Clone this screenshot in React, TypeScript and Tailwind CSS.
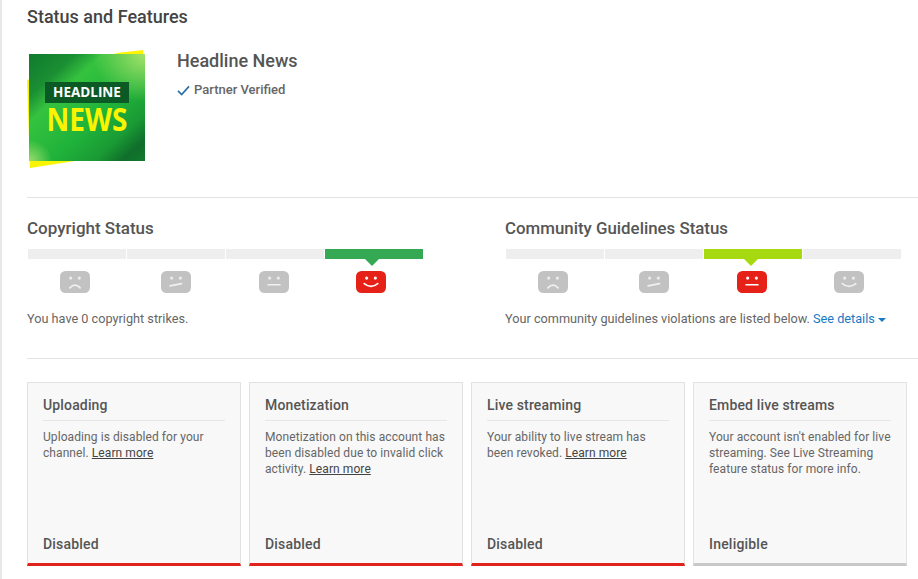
const font = { fontFamily: "Roboto, sans-serif" }

function Face({ mood, active }: { mood: number; active?: boolean }) {
  const mouths = [
    "M12.5 21.5 Q19 14.5 25.5 21.5",
    "M11.5 19 L26 16",
    "M11.5 17.5 L26.5 17.5",
    "M10.5 16 Q19 23 27.5 16",
  ]
  return (
    <svg width="30" height="22" viewBox="0 0 38 28" preserveAspectRatio="none" className="block">
      <rect x="0" y="0" width="38" height="28" rx="7" fill={active ? "#e62117" : "#c2c2c2"} />
      <circle cx="13.5" cy="9" r="2" fill={active ? "#ffffff" : "#ececec"} />
      <circle cx="24.5" cy="9" r="2" fill={active ? "#ffffff" : "#ececec"} />
      <path d={mouths[mood]} fill="none" stroke={active ? "#ffffff" : "#f0f0f0"} strokeWidth="2.2" strokeLinecap="round" />
    </svg>
  )
}

// the faces don't sit exactly under the middle of their segments
const faceOffsets = ["mr-[5px]", "mr-0", "mr-[2px]", "mr-[6px]"]

function StatusMeter({ active, color }: { active: number; color: string }) {
  return (
    <div className="grid w-[395px] grid-cols-4 gap-[1px]">
      {[0, 1, 2, 3].map((mood, i) => (
        <div key={i} className="flex flex-col items-center">
          {i === active ? (
            <div className="relative h-2.5 w-full" style={{ backgroundColor: color }}>
              <div
                className="absolute left-1/2 top-full h-0 w-0 -translate-x-[9px] border-x-[7px] border-t-[7px] border-x-transparent"
                style={{ borderTopColor: color }}
              />
            </div>
          ) : (
            <div className="h-2.5 w-full bg-[#eeeeee]" />
          )}
          <div className={`mt-3 ${faceOffsets[i]}`}>
            <Face mood={mood} active={i === active} />
          </div>
        </div>
      ))}
    </div>
  )
}

function Logo() {
  return (
    <div className="relative h-[118px] w-[118px] shrink-0">
      <svg width="118" height="118" viewBox="0 0 118 118" className="block">
        <defs>
          <linearGradient id="base" x1="0" y1="0" x2="1" y2="1">
            <stop offset="0" stopColor="#0f7a2e" />
            <stop offset="0.2" stopColor="#1b8f33" />
            <stop offset="0.32" stopColor="#35c23f" />
            <stop offset="0.6" stopColor="#1fb23a" />
            <stop offset="0.78" stopColor="#1a9a34" />
            <stop offset="0.9" stopColor="#0f6e2b" />
            <stop offset="1" stopColor="#127a2e" />
          </linearGradient>
          <radialGradient id="tr" cx="1" cy="0" r="0.45">
            <stop offset="0" stopColor="#a5e26a" />
            <stop offset="1" stopColor="#a5e26a" stopOpacity="0" />
          </radialGradient>
          <radialGradient id="bl" cx="0" cy="1" r="0.2">
            <stop offset="0" stopColor="#9bdc6c" />
            <stop offset="1" stopColor="#9bdc6c" stopOpacity="0" />
          </radialGradient>
        </defs>
        <polygon points="90,3 116,0 118,100 3,118 0,30" fill="#fbf400" />
        <rect x="2" y="4" width="116" height="107" fill="url(#base)" />
        <rect x="2" y="4" width="116" height="107" fill="url(#tr)" />
        <rect x="2" y="4" width="116" height="107" fill="url(#bl)" />
        <rect x="18" y="32" width="84" height="21" fill="#0b5a26" />
      </svg>
      <div
        className="absolute left-[18px] top-[32px] flex h-[21px] w-[84px] items-center justify-center text-[13.5px] font-bold text-white"
        style={{ fontFamily: "'Open Sans', sans-serif" }}
      >
        HEADLINE
      </div>
      <div
        className="absolute left-[2px] top-[50px] w-[116px] scale-y-[1.15] text-center text-[28px] font-bold leading-[36px] text-[#fbf400]"
        style={{ fontFamily: "'Open Sans', sans-serif" }}
      >
        NEWS
      </div>
    </div>
  )
}

function FeatureCard({
  title,
  status,
  children,
  barClass,
}: {
  title: string
  status: string
  children: React.ReactNode
  barClass: string
}) {
  return (
    <div className={`flex h-[184px] w-[214px] flex-col border-x border-t border-b-[3px] border-x-[#e2e2e2] border-t-[#e2e2e2] bg-[#f8f8f8] px-[15px] ${barClass}`}>
      <div className="flex h-[38px] items-end border-b border-[#e6e6e6] pb-[5px] text-[14px] font-medium leading-5 tracking-[0.15px] text-[#555555]">{title}</div>
      <p className="-mr-[6px] mt-2 text-[12px] leading-4 tracking-[0.08px] text-[#666666]">{children}</p>
      <div className="mt-auto pb-[9px] text-[14px] font-medium leading-5 tracking-[0.2px] text-[#555555]">{status}</div>
    </div>
  )
}

function LearnMore() {
  return <span className="text-[#444444] underline">Learn more</span>
}

export default function App() {
  return (
    <div className="h-[579px] w-[918px] overflow-hidden border-l-2 border-[#e8e8e8] bg-white pl-[25px]" style={font}>
      <h1 className="pt-[7px] text-[18px] font-medium leading-5 text-[#444444]">Status and Features</h1>

      {/* Channel */}
      <div className="mt-[23px] flex h-[121px]">
        <Logo />
        <div className="ml-8">
          <div className="text-[18px] font-medium leading-[22px] text-[#555555]">Headline News</div>
          <div className="mt-[10px] flex items-center gap-[4px] text-[13px] font-medium leading-4 text-[#666666]">
            <svg width="13" height="11" viewBox="0 0 14 12">
              <path d="M1 6.5 L5 10.5 L13 1.5" fill="none" stroke="#2b6ea5" strokeWidth="1.8" />
            </svg>
            Partner Verified
          </div>
        </div>
      </div>

      {/* Status meters */}
      <div className="mt-[26px] flex h-[162px] border-y border-[#e3e3e3]">
        <div className="w-[478px] pt-[20px]">
          <h2 className="text-[17px] font-medium leading-5 text-[#555555]">Copyright Status</h2>
          <div className="ml-px mt-[11px]">
            <StatusMeter active={3} color="#34a853" />
          </div>
          <p className="mt-[18px] text-[12.7px] leading-4 text-[#666666]">You have 0 copyright strikes.</p>
        </div>
        <div className="pt-[20px]">
          <h2 className="text-[16.85px] font-medium leading-5 text-[#555555]">Community Guidelines Status</h2>
          <div className="ml-px mt-[11px]">
            <StatusMeter active={2} color="#a6d90f" />
          </div>
          <p className="mt-[18px] whitespace-nowrap text-[12.7px] leading-4 text-[#666666]">
            Your community guidelines violations are listed below.{" "}
            <span className="text-[#167ac6]">See details</span>
            <span className="ml-[3px] inline-block h-0 w-0 border-x-[4px] border-t-[4px] border-x-transparent border-t-[#167ac6] align-middle" />
          </p>
        </div>
      </div>

      {/* Feature cards */}
      <div className="mt-[23px] flex gap-2">
        <FeatureCard title="Uploading" status="Disabled" barClass="border-b-[#e0231b]">
          Uploading is disabled for your channel. <LearnMore />
        </FeatureCard>
        <FeatureCard title="Monetization" status="Disabled" barClass="border-b-[#e0231b]">
          Monetization on this account has been disabled due to invalid click activity. <LearnMore />
        </FeatureCard>
        <FeatureCard title="Live streaming" status="Disabled" barClass="border-b-[#e0231b]">
          Your ability to live stream has been revoked. <LearnMore />
        </FeatureCard>
        <FeatureCard title="Embed live streams" status="Ineligible" barClass="border-b-[#c8c8c8]">
          Your account isn't enabled for live streaming. See Live Streaming feature status for more info.
        </FeatureCard>
      </div>
    </div>
  )
}
